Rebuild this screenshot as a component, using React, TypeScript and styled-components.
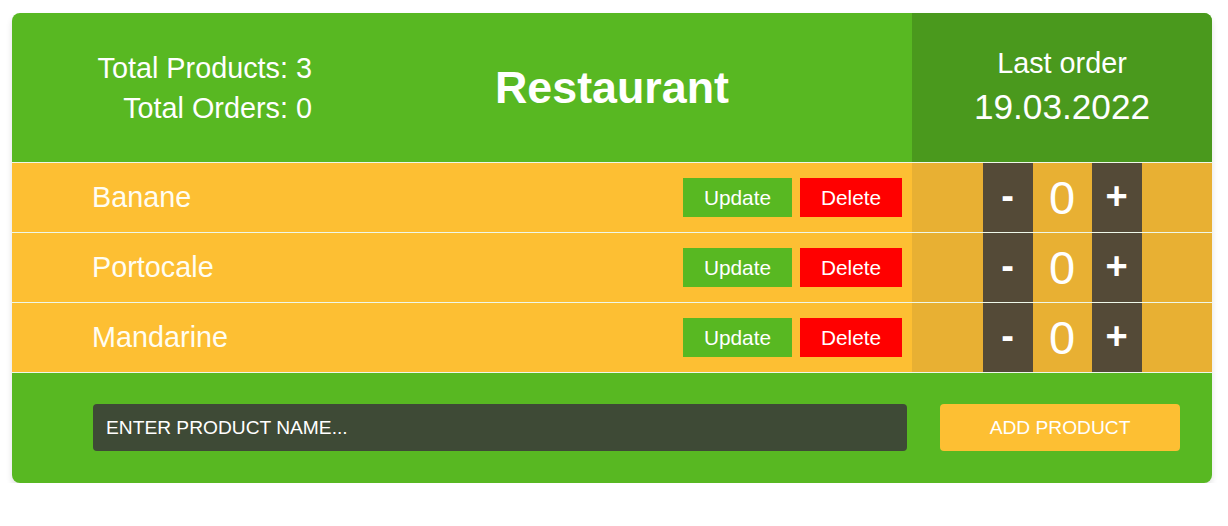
import styled, { createGlobalStyle } from 'styled-components'

const GlobalStyle = createGlobalStyle`
  body {
    margin: 0;
    background: #ffffff;
    font-family: "Liberation Sans", Arial, sans-serif;
  }
`

const Card = styled.div`
  width: 1200px;
  margin: 13px 0 0 12px;
  border-radius: 8px;
  overflow: hidden;
  background-color: #58b822;
  box-shadow: 0 4px 6px rgba(0, 0, 0, 0.12);
  color: white;
`

const Header = styled.div`
  display: grid;
  grid-template-columns: 300px 1fr 300px;
  height: 149px;
`

const Stats = styled.div`
  display: flex;
  flex-direction: column;
  justify-content: center;
  align-items: flex-end;
  font-size: 28.8px;
  line-height: 40px;
`

const Titulo = styled.h1`
  margin: 0;
  display: flex;
  justify-content: center;
  align-items: center;
  font-size: 44.8px;
  font-weight: bold;
`

const LastOrder = styled.div`
  display: flex;
  flex-direction: column;
  justify-content: center;
  align-items: center;
  background-color: #4a991d;
  padding-bottom: 2px;
`

const LastLabel = styled.div`
  font-size: 28.8px;
  line-height: 40px;
`

const LastDate = styled.div`
  font-size: 35.2px;
  line-height: 48px;
`

const Linha = styled.div`
  display: grid;
  grid-template-columns: 900px 300px;
  height: 69px;
  border-top: 1px solid rgba(255, 255, 255, 0.9);
`

const Produto = styled.div`
  display: flex;
  align-items: center;
  background-color: #fdbf33;
  padding: 0 10px 0 80px;
`

const Nome = styled.span`
  flex: 1;
  font-size: 28.8px;
  color: #fffdf2;
`

const Acoes = styled.div`
  display: flex;
  gap: 8px;
`

const Botao = styled.button<{ $cor: string; $largura: number }>`
  width: ${(p) => p.$largura}px;
  height: 39px;
  border: none;
  background-color: ${(p) => p.$cor};
  color: white;
  font-family: "Liberation Sans", Arial, sans-serif;
  font-size: 20.8px;
  padding: 0;
`

const Contador = styled.div`
  display: flex;
  justify-content: center;
  background-color: #e8b033;
`

const Passo = styled.div`
  width: 50px;
  display: flex;
  justify-content: center;
  align-items: center;
  background-color: #544a37;
  font-size: 38px;
  font-weight: bold;
  padding-bottom: 2px;
`

const Quantidade = styled.div`
  width: 59px;
  display: flex;
  justify-content: center;
  align-items: center;
  font-size: 47px;
`

const Rodape = styled.div`
  display: grid;
  grid-template-columns: 900px 300px;
  border-top: 1px solid rgba(255, 255, 255, 0.9);
  padding: 31px 0 32px;
`

const CampoWrap = styled.div`
  padding: 0 5px 0 81px;
`

const Campo = styled.input`
  box-sizing: border-box;
  width: 100%;
  height: 47px;
  border: none;
  border-radius: 4px;
  background-color: #3e4a36;
  color: white;
  padding: 0 13px;
  font-family: "Liberation Sans", Arial, sans-serif;
  font-size: 19.2px;
  outline: none;
  &::placeholder {
    color: #ffffff;
    opacity: 1;
  }
`

const AddWrap = styled.div`
  display: flex;
  padding-left: 28px;
`

const AddBotao = styled.button`
  width: 240px;
  height: 47px;
  border: none;
  border-radius: 4px;
  background-color: #fdbf33;
  color: white;
  font-family: "Liberation Sans", Arial, sans-serif;
  font-size: 19.2px;
`

const produtos = ['Banane', 'Portocale', 'Mandarine']

function App() {
  return (
    <>
      <GlobalStyle />
      <Card>
        <Header>
          <Stats>
            <div>Total Products: {produtos.length}</div>
            <div>Total Orders: 0</div>
          </Stats>
          <Titulo>Restaurant</Titulo>
          <LastOrder>
            <LastLabel>Last order</LastLabel>
            <LastDate>19.03.2022</LastDate>
          </LastOrder>
        </Header>

        {produtos.map((nome) => (
          <Linha key={nome}>
            <Produto>
              <Nome>{nome}</Nome>
              <Acoes>
                <Botao $cor="#58b822" $largura={109}>Update</Botao>
                <Botao $cor="#ff0000" $largura={102}>Delete</Botao>
              </Acoes>
            </Produto>
            <Contador>
              <Passo>-</Passo>
              <Quantidade>0</Quantidade>
              <Passo>+</Passo>
            </Contador>
          </Linha>
        ))}

        <Rodape>
          <CampoWrap>
            <Campo placeholder="ENTER PRODUCT NAME..." />
          </CampoWrap>
          <AddWrap>
            <AddBotao>ADD PRODUCT</AddBotao>
          </AddWrap>
        </Rodape>
      </Card>
    </>
  )
}

export default App
